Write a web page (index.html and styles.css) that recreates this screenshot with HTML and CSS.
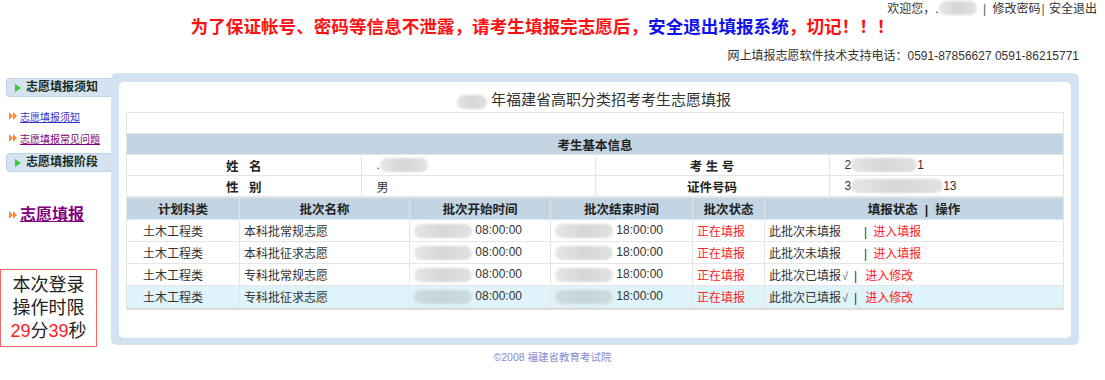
FILE: index.html
```html
<!DOCTYPE html>
<html>
<head>
<meta charset="utf-8">
<title>志愿填报</title>
<link rel="stylesheet" href="styles.css">
</head>
<body>
<div class="top">
 <div class="userbar">欢迎您，.<span class="mask m-user"></span> <span class="sep">|</span> <a href="#">修改密码</a><span class="sep2">|</span> <a href="#">安全退出</a></div>
 <h1 class="warn">为了保证帐号、密码等信息不泄露，请考生填报完志愿后，<span class="blue">安全退出填报系统</span>，切记！！！</h1>
 <p class="support">网上填报志愿软件技术支持电话：0591-87856627 0591-86215771</p>
</div>
<div class="page">
 <div class="side">
  <div class="tab"><svg width="6" height="8" viewBox="0 0 6 8"><path d="M0 0L6 4L0 8Z" fill="#33cc33"/></svg>志愿填报须知</div>
  <ul class="links">
   <li><svg width="8" height="8" viewBox="0 0 8 8"><path d="M0 0L4 4L0 8ZM4 0L8 4L4 8Z" fill="#ff8833"/></svg><a href="#" class="blue-link">志愿填报须知</a></li>
   <li><svg width="8" height="8" viewBox="0 0 8 8"><path d="M0 0L4 4L0 8ZM4 0L8 4L4 8Z" fill="#ff8833"/></svg><a href="#" class="visited">志愿填报常见问题</a></li>
  </ul>
  <div class="tab"><svg width="6" height="8" viewBox="0 0 6 8"><path d="M0 0L6 4L0 8Z" fill="#33cc33"/></svg>志愿填报阶段</div>
  <div class="big"><svg width="8" height="8" viewBox="0 0 8 8"><path d="M0 0L4 4L0 8ZM4 0L8 4L4 8Z" fill="#ff8833"/></svg><a href="#">志愿填报</a></div>
  <div class="timer">本次登录<br>操作时限<br><span class="red">29</span>分<span class="red">39</span>秒</div>
 </div>
 <div class="panel">
  <div class="inner">
   <h2 class="title"><span class="mask m-year"></span>年福建省高职分类招考考生志愿填报</h2>
   <div class="box">
    <div class="spacer"></div>
    <table class="info">
     <tr><th colspan="4">考生基本信息</th></tr>
     <tr><td class="lbl">姓&nbsp;&nbsp;&nbsp;名</td><td class="val">.<span class="mask m-name"></span></td><td class="lbl">考&nbsp;生&nbsp;号</td><td class="val">2<span class="mask m-id"></span>1</td></tr>
     <tr><td class="lbl">性&nbsp;&nbsp;&nbsp;别</td><td class="val">男</td><td class="lbl">证件号码</td><td class="val">3<span class="mask m-card"></span>13</td></tr>
    </table>
    <table class="batch">
     <tr><th class="c1">计划科类</th><th class="c2">批次名称</th><th class="c3">批次开始时间</th><th class="c4">批次结束时间</th><th class="c5">批次状态</th><th>填报状态&nbsp;&nbsp;|&nbsp;&nbsp;操作</th></tr>
     <tr><td class="kind">土木工程类</td><td>本科批常规志愿</td><td><span class="mask m-date"></span> 08:00:00</td><td><span class="mask m-date"></span> 18:00:00</td><td class="red">正在填报</td><td>此批次未填报<span class="gap-l">|</span><a href="#">进入填报</a></td></tr>
     <tr><td class="kind">土木工程类</td><td>本科批征求志愿</td><td><span class="mask m-date"></span> 08:00:00</td><td><span class="mask m-date"></span> 18:00:00</td><td class="red">正在填报</td><td>此批次未填报<span class="gap-l">|</span><a href="#">进入填报</a></td></tr>
     <tr><td class="kind">土木工程类</td><td>专科批常规志愿</td><td><span class="mask m-date"></span> 08:00:00</td><td><span class="mask m-date"></span> 18:00:00</td><td class="red">正在填报</td><td>此批次已填报<span class="tick">√</span><span class="gap-s">|</span><a href="#">进入修改</a></td></tr>
     <tr class="on"><td class="kind">土木工程类</td><td>专科批征求志愿</td><td><span class="mask m-date"></span> 08:00:00</td><td><span class="mask m-date"></span> 18:00:00</td><td class="red">正在填报</td><td>此批次已填报<span class="tick">√</span><span class="gap-s">|</span><a href="#">进入修改</a></td></tr>
    </table>
   </div>
  </div>
 </div>
</div>
<p class="copy">©2008 福建省教育考试院</p>
</body>
</html>
```
FILE: styles.css
```css
body {
 font-family: "Liberation Sans","Noto Sans CJK SC",sans-serif;
 font-size: 12px;
 color: #333;
 margin: 0;
 padding: 0;
 width: 1105px;
}
a {
 color: #333;
 text-decoration: none;
}
.red {
 color: #ff2222;
}
.top {
 height: 73px;
}
.userbar {
 text-align: right;
 padding: 1px 8px 0 0;
 line-height: 14px;
 height: 15px;
}
.userbar .sep {
 margin: 0 3px;
 color: #555;
}
.userbar .sep2 {
 margin: 0 1px;
 color: #555;
}
.warn {
 margin: 0;
 font-size: 17.6px;
 line-height: 22px;
 font-weight: bold;
 color: #ff1111;
 text-align: center;
 padding-right: 20px;
}
.warn .blue {
 color: #1111ee;
}
.support {
 margin: 11px 26px 0 0;
 line-height: 14px;
 text-align: right;
}
.page {
 display: flex;
 align-items: flex-start;
}
.side {
 width: 111px;
 padding-top: 5px;
}
.tab {
 margin-left: 6px;
 height: 17px;
 line-height: 17px;
 background: #d5e3f1;
 border: 1px solid #c2d5e8;
 border-right: none;
 border-radius: 4px 0 0 4px;
 font-weight: bold;
 color: #1d2d1d;
 padding-left: 8px;
}
.tab svg {
 margin-right: 5px;
 vertical-align: -0.5px;
}
.links {
 list-style: none;
 margin: 0;
 padding: 10px 0 2px 9px;
}
.links li {
 line-height: 22px;
 font-size: 10px;
}
.links svg, .big svg {
 margin-right: 3px;
 vertical-align: 1px;
}
.links a {
 text-decoration: underline;
}
.blue-link {
 color: #3333cc !important;
}
.visited, .big a {
 color: #800080 !important;
}
.big {
 margin-top: 31px;
 padding-left: 9px;
 line-height: 24px;
}
.big a {
 font-size: 16px;
 font-weight: bold;
 text-decoration: underline;
}
.timer {
 margin-top: 41px;
 width: 95px;
 border: 1px solid #ff6666;
 text-align: center;
 font-size: 18px;
 line-height: 23px;
 padding: 4px 0 3px;
 color: #222;
}
.panel {
 width: 968px;
 height: 272px;
 box-sizing: border-box;
 background: #d3e2f1;
 border-radius: 6px;
 padding: 9px 8px 7px 8px;
}
.inner {
 background: #fff;
 border-radius: 5px;
 height: 100%;
 padding: 8px 7px 0 7px;
 box-sizing: border-box;
}
.title {
 margin: 0;
 text-align: center;
 font-family: "Liberation Serif","Noto Sans CJK SC",serif;
 font-size: 15px;
 font-weight: normal;
 line-height: 20px;
 color: #333;
 padding-right: 2px;
}
.box {
 margin-top: 2px;
 border: 1px solid #e4e4e4;
 border-bottom: 2px solid #dcdcdc;
}
.spacer {
 height: 20px;
}
table {
 width: 100%;
 border-collapse: collapse;
 table-layout: fixed;
}
td, th {
 border: 1px solid #e6e6e6;
 padding: 0;
 white-space: nowrap;
}
tr > :first-child {
 border-left: none;
}
tr > :last-child {
 border-right: none;
}
th {
 background: #c3d5e2;
 font-weight: bold;
 font-size: 12.5px;
 color: #222;
 border-color: #dbe6ef;
}
.info th {
 height: 20px;
}
.info td {
 height: 20px;
}
.info .lbl {
 width: 233px;
 text-align: center;
 font-weight: bold;
 font-size: 12.5px;
 color: #222;
}
.info .val {
 padding-left: 15px;
}
.batch th {
 height: 21px;
}
.batch td {
 height: 21px;
 padding-left: 4px;
}
.batch .c1 { width: 112px; }
.batch .c2 { width: 169px; }
.batch .c3 { width: 140px; }
.batch .c4 { width: 141px; }
.batch .c5 { width: 71px; }
.batch td.kind {
 padding-left: 16px;
}
.batch a {
 color: #ff2222;
}
.batch tr.on td {
 background: #dff3fa;
}
.gap-l {
 margin: 0 6px 0 23px;
}
.gap-s {
 margin: 0 8px 0 6px;
}
.tick {
 font-size: 11px;
 margin-left: 1px;
 color: #555;
}
.mask {
 display: inline-block;
 vertical-align: middle;
 height: 14px;
 border-radius: 7px;
 background: linear-gradient(90deg, #e6e6e6, #d6d6d6 50%, #e2e2e2);
 filter: blur(1px);
}
tr.on .mask {
 background: linear-gradient(90deg, #ccdde2, #c4d4da 50%, #ccdde2);
}
.m-user { width: 38px; vertical-align: -2px; }
.m-year { width: 30px; margin-right: 4px; }
.m-name { width: 48px; }
.m-id { width: 66px; }
.m-card { width: 92px; }
.m-date { width: 58px; }
.copy {
 margin: 3px 0 0;
 text-align: center;
 font-size: 10.5px;
 line-height: 14px;
 color: #8a8acc;
}
```
